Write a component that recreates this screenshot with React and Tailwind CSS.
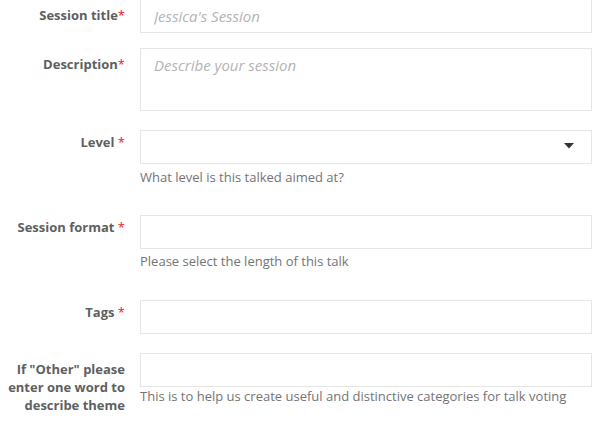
import React from "react";

const font = { fontFamily: '"Open Sans", sans-serif' };

function Label({ children, star = "*", pt }) {
  return (
    <div className={`text-right text-[13px] leading-[18px] font-bold text-[#5e5f61] ${pt}`}>
      {children}
      <span className="font-normal text-[#e8201f]">{star}</span>
    </div>
  );
}

function Help({ children, mt }) {
  return <div className={`text-[13px] leading-[18px] text-[#747474] ${mt}`}>{children}</div>;
}

const inputCls =
  "block w-full h-[34px] border border-[#e6e6e6] bg-white px-[13px] py-[6px] text-[15px] leading-[20px] text-[#333] outline-none placeholder:italic placeholder:text-[#b4b4b4]";

export default function App() {
  return (
    <div style={font} className="w-[607px] h-[431px] overflow-hidden bg-white">
      <div className="grid grid-cols-[125px_452px] gap-x-[15px] mt-[-1px]">
        {/* Session title */}
        <Label pt="pt-[7px]">Session title</Label>
        <div>
          <input className={inputCls} placeholder="Jessica's Session" />
        </div>

        {/* Description */}
        <div className="mt-[15px]">
          <Label pt="pt-[7px]">Description</Label>
        </div>
        <div className="mt-[15px]">
          <textarea
            className="block w-full h-[63px] resize-none border border-[#e6e6e6] bg-white px-[13px] py-[6px] text-[15px] leading-[20px] text-[#333] outline-none placeholder:italic placeholder:text-[#b4b4b4]"
            placeholder="Describe your session"
          />
        </div>

        {/* Level */}
        <div className="mt-[19px]">
          <Label pt="pt-[3px]" star=" *">Level</Label>
        </div>
        <div className="mt-[19px]">
          <div className="relative h-[34px] border border-[#e6e6e6] bg-white">
            <svg
              className="absolute right-[17px] top-[12px]"
              width="10"
              height="6"
              viewBox="0 0 10 6"
            >
              <path d="M0 0 L10 0 L5 5.5 Z" fill="#333" />
            </svg>
          </div>
          <Help mt="mt-[4px]">What level is this talked aimed at?</Help>
        </div>

        {/* Session format */}
        <div className="mt-[29px]">
          <Label pt="pt-[3px]" star=" *">Session format</Label>
        </div>
        <div className="mt-[29px]">
          <input className={inputCls} />
          <Help mt="mt-[3px]">Please select the length of this talk</Help>
        </div>

        {/* Tags */}
        <div className="mt-[30px]">
          <Label pt="pt-[3px]" star=" *">Tags</Label>
        </div>
        <div className="mt-[30px]">
          <input className={inputCls} />
        </div>

        {/* Other */}
        <div className="mt-[19px]">
          <Label pt="pt-[7px]" star="">
            If "Other" please enter one word to describe theme
          </Label>
        </div>
        <div className="mt-[19px]">
          <input className={inputCls} />
          <Help mt="mt-0">This is to help us create useful and distinctive categories for talk voting</Help>
        </div>
      </div>
    </div>
  );
}
